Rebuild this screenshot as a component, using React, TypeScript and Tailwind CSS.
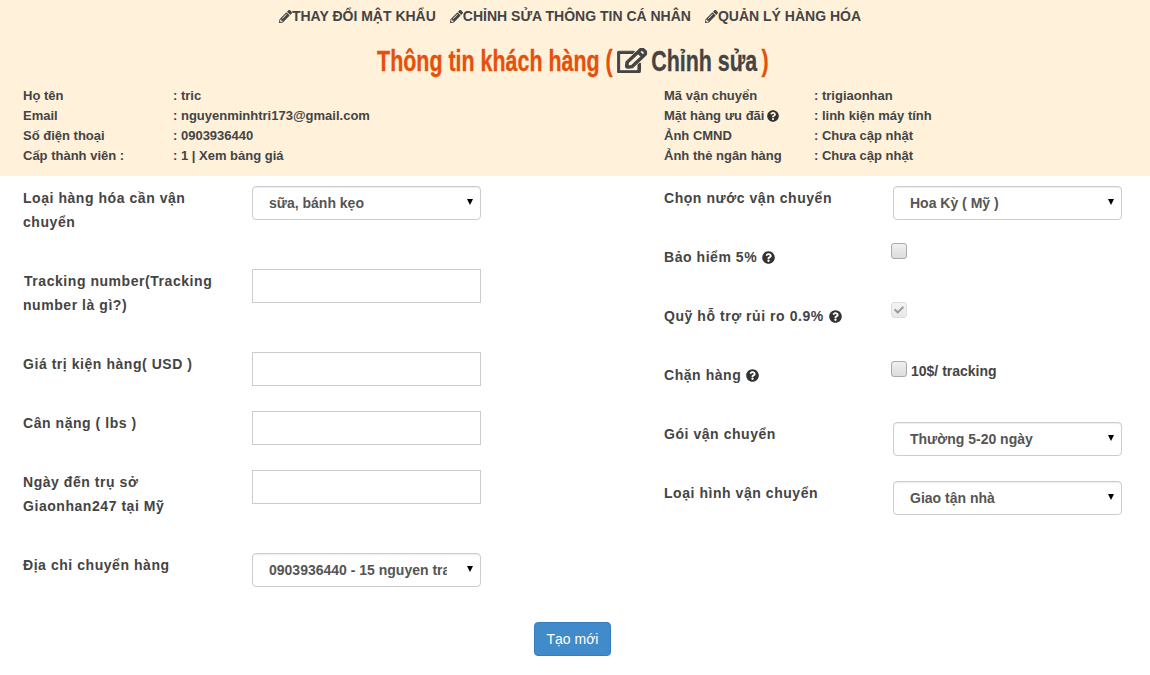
import { FaPencilAlt, FaRegEdit, FaQuestionCircle, FaCheck } from 'react-icons/fa';

const navLinks = ['THAY ĐỔI MẬT KHẨU', 'CHỈNH SỬA THÔNG TIN CÁ NHÂN', 'QUẢN LÝ HÀNG HÓA'];

const InfoRow = ({ label, value, help }: { label: string; value: string; help?: boolean }) => (
  <div className="flex h-5 items-center">
    <div className="flex w-[150px] items-center gap-[3px]">
      {label}
      {help && <FaQuestionCircle className="size-3 text-[#333]" />}
    </div>
    <div>: {value}</div>
  </div>
);

const Label = ({ children, help }: { children: React.ReactNode; help?: boolean }) => (
  <div className="w-[229px] pr-6 text-[14px] leading-6 font-bold tracking-[0.55px] text-[#444]">
    {children}
    {help && <FaQuestionCircle className="ml-[5px] inline size-[13px] -translate-y-px text-[#333]" />}
  </div>
);

const Select = ({ value }: { value: string }) => (
  <div className="relative w-[229px]">
    <select
      defaultValue={value}
      className="h-[34px] w-full appearance-none rounded border border-[#ccc] bg-white pr-[33px] pl-4 text-[14px] font-bold text-[#555] shadow-[inset_0_1px_1px_rgba(0,0,0,0.075)]"
    >
      <option>{value}</option>
    </select>
    <svg
      viewBox="0 0 8 6"
      preserveAspectRatio="none"
      className="pointer-events-none absolute top-[13px] right-[8px] h-[6px] w-[6px] fill-black"
    >
      <path d="M0 0h8L4 6z" />
    </svg>
  </div>
);

const TextInput = () => <input type="text" className="h-[34px] w-[229px] border border-[#ccc] bg-white" />;

const Checkbox = ({ checked }: { checked?: boolean }) => (
  <span
    className={
      'relative block size-4 shrink-0 rounded-[3px] border bg-gradient-to-b ' +
      (checked
        ? 'border-[#ddd] from-[#f4f4f4] to-[#e8e8e8]'
        : 'border-[#aaa] from-[#f0f0f0] to-[#dcdcdc]')
    }
  >
    {checked && <FaCheck className="absolute top-[2px] left-[2px] size-[10px] text-[#999]" />}
  </span>
);

export default function App() {
  return (
    <div className="h-[675px] w-[1150px] overflow-hidden bg-white font-['Liberation_Sans',Arial,sans-serif] text-[#444]">
      <div className="h-[176px] bg-[#fff1da]">
        <div className="flex h-8 items-center justify-center gap-[14px] pt-px pr-[10px] text-[14px] font-bold text-[#444]">
          {navLinks.map((link) => (
            <div key={link} className="flex items-center">
              <FaPencilAlt className="size-[13px] shrink-0" />
              {link}
            </div>
          ))}
        </div>
        <h1 className="mt-[9px] flex h-[38px] scale-x-[0.714] items-center justify-center pr-[6px] text-[30px] font-bold whitespace-nowrap text-[#e5500a] [-webkit-text-stroke:0.3px]">
          Thông tin khách hàng (
          <span className="mx-[6px] flex items-center gap-[6px] text-[#444]">
            <FaRegEdit preserveAspectRatio="none" strokeWidth={20} className="h-[25px] w-[42px]" />
            Chỉnh sửa
          </span>
          )
        </h1>
        <div className="mt-[7px] grid grid-cols-[641px_1fr] pl-[23px] text-[13px] font-bold">
          <div>
            <InfoRow label="Họ tên" value="tric" />
            <InfoRow label="Email" value="nguyenminhtri173@gmail.com" />
            <InfoRow label="Số điện thoại" value="0903936440" />
            <InfoRow label="Cấp thành viên :" value="1 | Xem bảng giá" />
          </div>
          <div>
            <InfoRow label="Mã vận chuyển" value="trigiaonhan" />
            <InfoRow label="Mặt hàng ưu đãi" value="linh kiện máy tính" help />
            <InfoRow label="Ảnh CMND" value="Chưa cập nhật" />
            <InfoRow label="Ảnh thẻ ngân hàng" value="Chưa cập nhật" />
          </div>
        </div>
      </div>

      <div className="grid grid-cols-[641px_1fr] pt-[10px] pl-[23px]">
        <div>
          <div className="flex h-[83px]">
            <Label>Loại hàng hóa cần vận chuyển</Label>
            <Select value="sữa, bánh kẹo" />
          </div>
          <div className="flex h-[83px]">
            <Label>
              <span className="pl-px">Tracking number(Tracking number là gì?)</span>
            </Label>
            <TextInput />
          </div>
          <div className="flex h-[59px]">
            <Label>Giá trị kiện hàng( USD )</Label>
            <TextInput />
          </div>
          <div className="flex h-[59px]">
            <Label>Cân nặng ( lbs )</Label>
            <TextInput />
          </div>
          <div className="flex h-[83px]">
            <Label>Ngày đến trụ sở Giaonhan247 tại Mỹ</Label>
            <TextInput />
          </div>
          <div className="flex h-[69px]">
            <Label>Địa chỉ chuyển hàng</Label>
            <Select value="0903936440 - 15 nguyen trai" />
          </div>
        </div>
        <div>
          <div className="flex h-[59px]">
            <Label>Chọn nước vận chuyển</Label>
            <Select value="Hoa Kỳ ( Mỹ )" />
          </div>
          <div className="flex h-[59px]">
            <Label help>Bảo hiểm 5%</Label>
            <div className="-mt-[2px] -ml-[2px]">
              <Checkbox />
            </div>
          </div>
          <div className="flex h-[59px]">
            <Label help>Quỹ hỗ trợ rủi ro 0.9%</Label>
            <div className="-mt-[2px] -ml-[2px]">
              <Checkbox checked />
            </div>
          </div>
          <div className="flex h-[59px]">
            <Label help>Chặn hàng</Label>
            <div className="-mt-[2px] -ml-[2px] flex items-start gap-1 text-[14px] leading-5 font-bold text-[#444]">
              <Checkbox />
              <span>10$/ tracking</span>
            </div>
          </div>
          <div className="flex h-[59px]">
            <Label>Gói vận chuyển</Label>
            <Select value="Thường 5-20 ngày" />
          </div>
          <div className="flex h-[59px]">
            <Label>Loại hình vận chuyển</Label>
            <Select value="Giao tận nhà" />
          </div>
        </div>
      </div>

      <div className="ml-[534px]">
        <button className="h-[34px] w-[77px] rounded border border-[#357ebd] bg-[#428bca] text-[14px] text-white">
          Tạo mới
        </button>
      </div>
    </div>
  );
}
